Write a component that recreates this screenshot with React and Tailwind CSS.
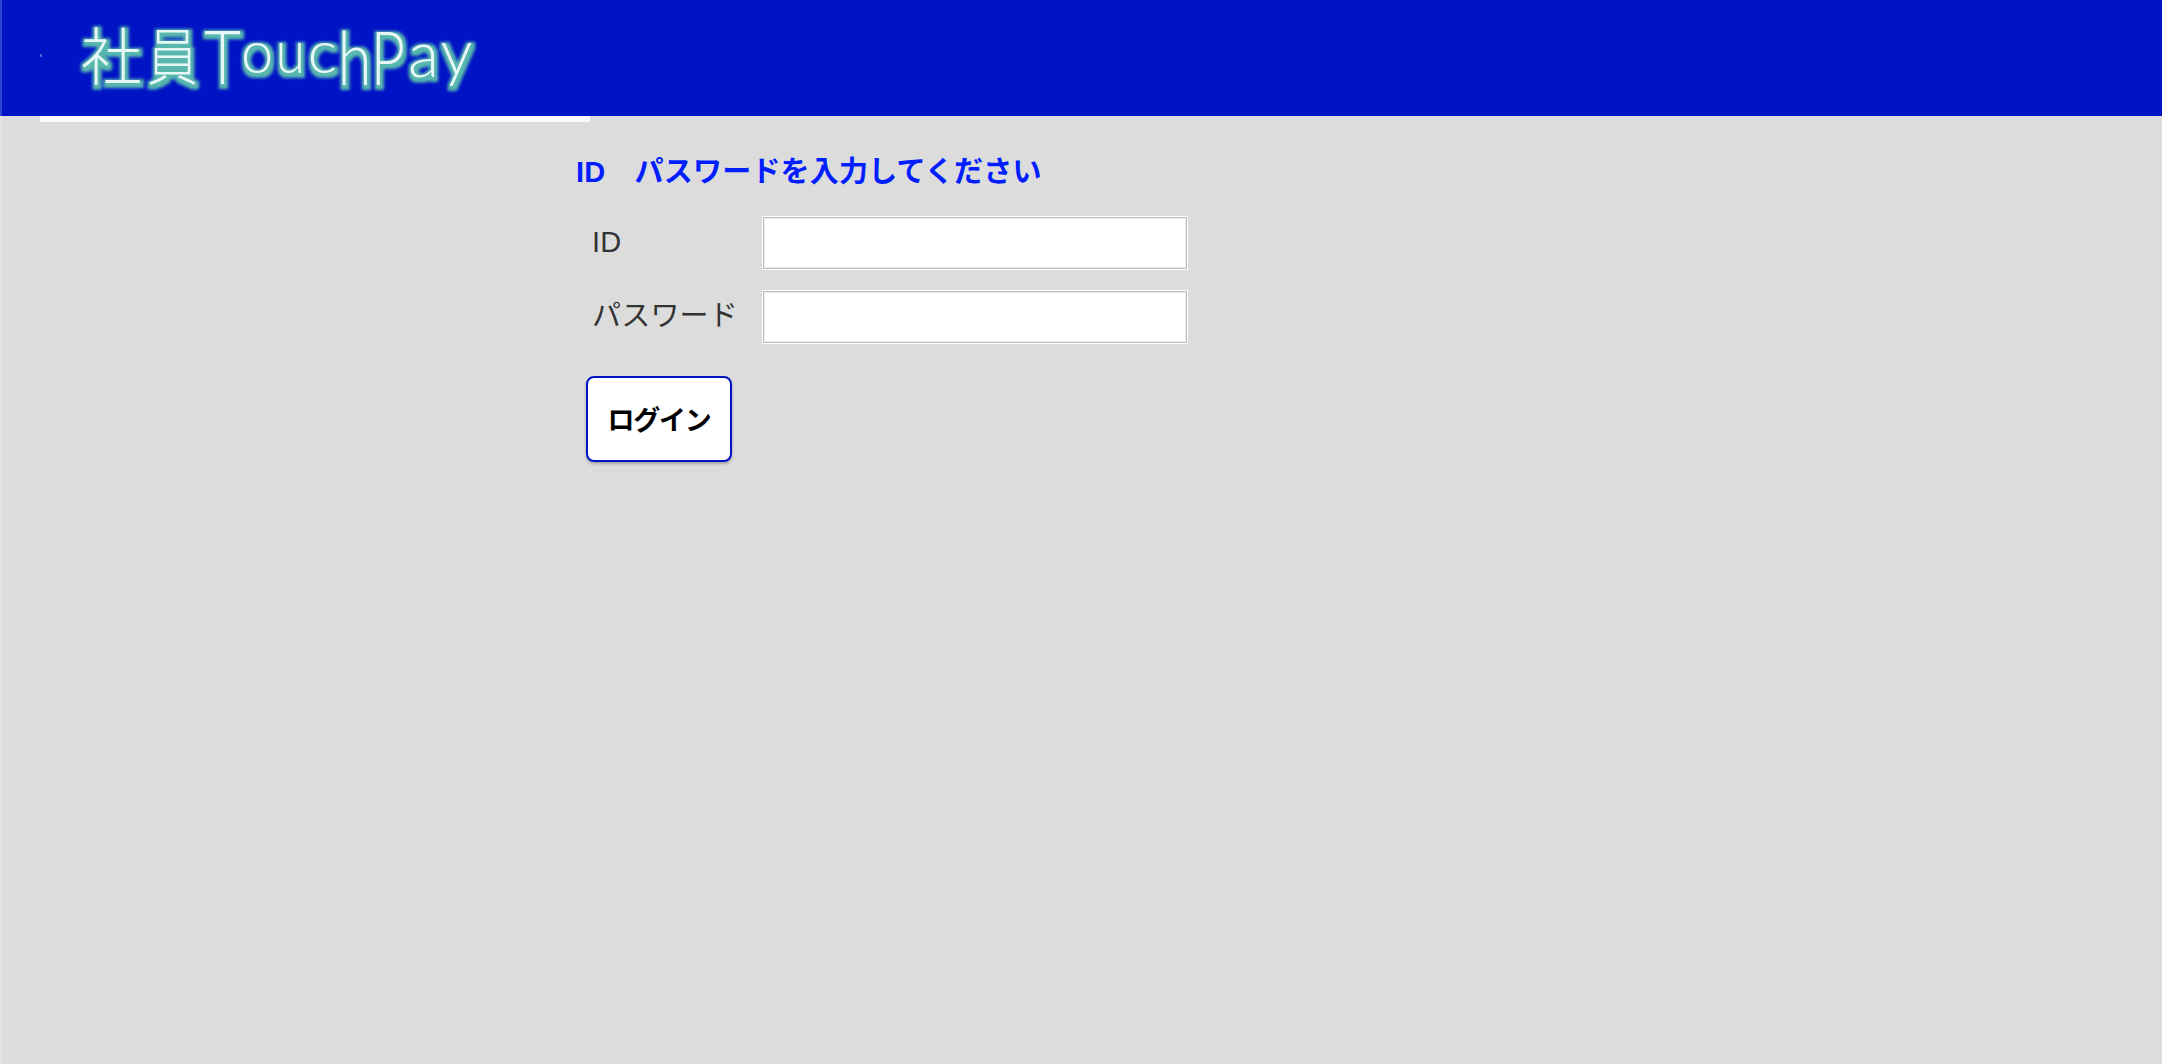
const logoGlyphs = [
  { ch: "社", x: 81, y: 80, size: 62, sx: 0.98, cjk: true },
  { ch: "員", x: 147, y: 79.5, size: 62, sx: 0.82, cjk: true },
  { ch: "T", x: 204, y: 84, size: 74, sx: 0.86 },
  { ch: "o", x: 241, y: 73, size: 59, sx: 0.98 },
  { ch: "u", x: 275.5, y: 73, size: 60, sx: 0.9 },
  { ch: "c", x: 307.5, y: 73, size: 60, sx: 1.05 },
  { ch: "h", x: 337.5, y: 85, size: 74, sx: 0.84 },
  { ch: "P", x: 370.5, y: 85, size: 75, sx: 0.8 },
  { ch: "a", x: 408, y: 77, size: 66, sx: 0.97 },
  { ch: "y", x: 440.5, y: 75, size: 65, sx: 0.98 },
];

function Logo() {
  return (
    <svg className="shrink-0" width="460" height="116" viewBox="42 0 460 116" role="img" aria-label="社員TouchPay">
      <defs>
        <filter id="glow" filterUnits="userSpaceOnUse" x="60" y="0" width="440" height="116" colorInterpolationFilters="sRGB">
          <feMorphology in="SourceAlpha" operator="dilate" radius="3" result="thick" />
          <feGaussianBlur in="thick" stdDeviation="1.5" result="soft" />
          <feOffset in="soft" dx="1.2" dy="2" result="shifted" />
          <feFlood floodColor="#58b8ae" />
          <feComposite in2="shifted" operator="in" result="halo" />
          <feMerge>
            <feMergeNode in="halo" />
            <feMergeNode in="SourceGraphic" />
          </feMerge>
        </filter>
      </defs>
      <g filter="url(#glow)" fill="#e6f7f5" fontWeight="300">
        {logoGlyphs.map((g) => (
          <text
            key={g.ch}
            transform={`translate(${g.x} ${g.y}) scale(${g.sx} 1)`}
            fontSize={g.size}
            fontFamily={g.cjk ? "'Noto Sans CJK JP', sans-serif" : "Lato, sans-serif"}
          >
            {g.ch}
          </text>
        ))}
      </g>
    </svg>
  );
}

function Header() {
  return (
    <header className="flex h-[116px] bg-[#0014c6]">
      <div className="w-0.5 shrink-0 bg-[#3344d0]" />
      <div className="mt-[54px] ml-[38px] h-[3px] w-[2px] shrink-0 bg-[#5a62d8]" />
      <Logo />
    </header>
  );
}

function Field({ label, type }) {
  return (
    <label className="flex h-[54px]">
      <span className="w-[170px] text-[29px] leading-[52px] tracking-[0.2px] text-[#333]">{label}</span>
      <span className="flex h-[54px] w-[426px] border border-white">
        <input type={type} className="w-full border border-[#bbb] bg-white px-2 text-[29px] ring-1 ring-[#eee] outline-none ring-inset" />
      </span>
    </label>
  );
}

export default function App() {
  return (
    <div className="h-[1064px] w-[2162px] overflow-hidden bg-[#dcdcdc] font-['Liberation_Sans','Noto_Sans_CJK_JP',sans-serif]">
      <Header />
      <div className="flex h-[948px]">
        <div className="w-0.5 bg-[#e4e4e4]" />
        <div className="ml-[38px] h-1.5 w-[550px] bg-[#fafafa]" />
        <main className="-ml-[14px] pt-[35px]">
          <h1 className="text-[29px] leading-[42px] font-bold tracking-[0.2px] whitespace-pre text-[#001eff]">ID　パスワードを入力してください</h1>
          <form className="mt-[23px] ml-4 flex flex-col gap-5">
            <Field label="ID" type="text" />
            <Field label="パスワード" type="password" />
            <button
              type="button"
              className="mt-3 -ml-1.5 h-[86px] w-[146px] rounded-lg border-2 border-[#0014c6] bg-white pt-[4px] text-[27px] font-bold tracking-[-1.3px] text-black shadow-[0_2px_3px_rgba(0,0,0,0.25)]"
            >
              ログイン
            </button>
          </form>
        </main>
      </div>
    </div>
  );
}
